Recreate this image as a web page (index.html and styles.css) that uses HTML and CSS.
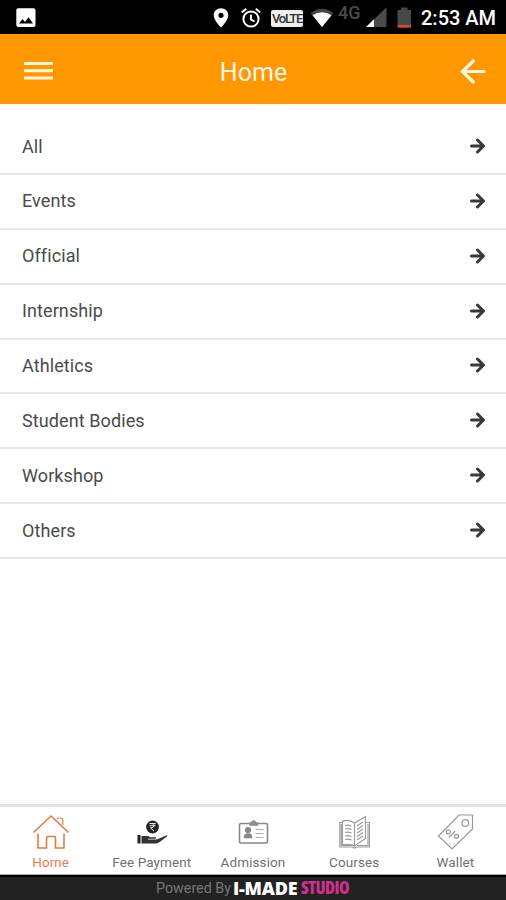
FILE: index.html
```html
<!DOCTYPE html>
<html lang="en">
<head>
<meta charset="utf-8">
<title>Home</title>
<link rel="stylesheet" href="styles.css">
</head>
<body>
<svg class="defs" aria-hidden="true">
  <symbol id="arrow" viewBox="0 0 16 16"><path d="M1.500 8h11.500M7.500 2 13.500 8l-6 6" fill="none" stroke="#383838" stroke-width="3" stroke-linecap="round" stroke-linejoin="round"/></symbol>
</svg>
<div class="app">
  <div class="status">
    <svg class="photo" width="20" height="20" viewBox="0 0 20 20"><rect x=".3" y=".3" width="19.2" height="18.7" rx="2" fill="#fff"/><path d="M3 15.5 6.5 11l2.5 3 3.5-4.7 4.5 6.200z" fill="#000"/></svg>
    <svg width="16" height="20" viewBox="0 0 16 20"><path fill="#fff" fill-rule="evenodd" d="M8 .3C3.800.3.700 3.300.700 7.300.700 12.500 8 19.500 8 19.500s7.300-7 7.300-12.200C15.300 3.300 12.200.3 8 .3zm0 4.400a2.600 2.600 0 1 1 0 5.200 2.600 2.600 0 0 1 0-5.200z"/></svg>
    <svg class="alarm" width="20" height="20" viewBox="0 0 20 20" fill="none" stroke="#fff" stroke-width="2"><circle cx="10" cy="11" r="7.600"/><path d="M10 6.500V11.500l3.500 2M.8 4.500l4.400-3.700M19.200 4.500l-4.400-3.700"/></svg>
    <span class="volte">VoLTE</span>
    <svg class="wifi" width="24" height="20" viewBox="0 0 24 20"><path d="M.5 5Q12-3.500 23.500 5L12 19z" fill="#444"/><path d="M2.500 7.200Q12 1.500 21.500 7.200L12 19z" fill="#fff"/></svg>
    <span class="net">4G</span>
    <svg class="signal" width="21" height="20" viewBox="0 0 21 20"><path d="M0 20 20.500.3V20z" fill="#4a4a4a"/><path d="M0 20 8 12.300V20z" fill="#fff"/></svg>
    <svg class="battery" width="15" height="21" viewBox="0 0 15 21"><path d="M.5 3H4V.5h6.500V3H14v15H.500z" fill="#484848"/><path d="M.5 18H14v2.700H.500z" fill="#dc4b1c"/></svg>
    <span class="time">2:53 AM</span>
  </div>
  <header class="bar">
    <svg width="30" height="20" viewBox="0 0 30 20"><path d="M0 2.500h29M0 9.700h29M0 17h29" stroke="#fff6e4" stroke-width="3"/></svg>
    <h1>Home</h1>
    <svg width="26" height="26" viewBox="0 0 26 26"><path d="M25.500 13.500H2.500M14.200 2 2.500 13.500l11.700 11.500" fill="none" stroke="#fff6e4" stroke-width="3.200"/></svg>
  </header>
  <main class="list">
    <div class="row">All<svg><use href="#arrow"/></svg></div>
    <div class="row">Events<svg><use href="#arrow"/></svg></div>
    <div class="row">Official<svg><use href="#arrow"/></svg></div>
    <div class="row">Internship<svg><use href="#arrow"/></svg></div>
    <div class="row">Athletics<svg><use href="#arrow"/></svg></div>
    <div class="row">Student Bodies<svg><use href="#arrow"/></svg></div>
    <div class="row">Workshop<svg><use href="#arrow"/></svg></div>
    <div class="row">Others<svg><use href="#arrow"/></svg></div>
  </main>
  <nav class="tabs">
    <div class="tab active">
      <svg viewBox="0 0 38 38" fill="none" stroke="#e07a45" stroke-width="1.600"><path d="M1.500 19.500 19 3l17.500 16.500"/><path d="M6 20.500V35h8.500V25q0-1.500 1.500-1.500h6q1.500 0 1.500 1.500v10H32V20.500"/><path d="M25 6.500q0-1.500 2-1.500h2q1.800 0 1.800 2v5" stroke-width="1.200"/></svg>
      <span>Home</span>
    </div>
    <div class="tab">
      <svg viewBox="0 0 38 38"><circle cx="19.500" cy="14" r="6.400" fill="#252525"/><path d="M16.500 10.500h6M16.500 12.800h6M17.500 10.500q4 0 3.500 2.200T17.500 15l3.500 3" fill="none" stroke="#eee" stroke-width="1"/><path d="M4.500 22h3v8.500h-3z" fill="#222"/><path d="M8.500 23h5q2 0 4 1.200h5q1.500 1.300-.5 2H16.500h8l8.500-3.700q2-.500 1 1l-8 6q-1.500 1-4 1H8.500z" fill="#333"/><path d="M15 26.200h8" stroke="#eee" stroke-width=".8"/></svg>
      <span>Fee Payment</span>
    </div>
    <div class="tab">
      <svg viewBox="0 0 38 38" fill="none" stroke="#888" stroke-width="1.600"><path d="M15 10.500H7q-1.500 0-1.500 1.500v16.500Q5.500 30 7 30h25q1.500 0 1.500-1.500V12q0-1.500-1.500-1.500H24"/><path d="M16 12v-2h2q0-2 1.700-2t1.700 2h2v2z" fill="#999"/><circle cx="14" cy="17" r="2.300" fill="#888"/><path d="M10.500 24.500q0-3.500 3.500-3.500t3.500 3.500z" fill="#888"/><path d="M21.500 16.500h8M21.500 20.500h8M21.500 24.500h8" stroke="#aaa" stroke-width="1.200"/></svg>
      <span>Admission</span>
    </div>
    <div class="tab">
      <svg viewBox="0 0 38 38" fill="none" stroke="#999" stroke-width="1.100"><path d="M19.500 10q-5-4-12-2v24q7-2 12 1zM19.500 10 30.500 3.500v22L19.500 33z"/><path d="M7.500 9.500H4.800V34H17.500q2 2 4 0h13V9.500h-4M6.300 11v21.500H18.500M33 11v21.500H22"/><path d="M10 12.500q3-1 6.500.5M10 16q3-1 6.500.5M10 19.500q3-1 6.500.5M10 23q3-1 6.500.5M10 26.500q3-1 6.500.5M22 13l6-4M22 16.500l6-4M22 20l6-4M22 23.500l6-4M22 27l6-4"/></svg>
      <span>Courses</span>
    </div>
    <div class="tab">
      <svg viewBox="0 0 38 38" fill="none" stroke="#999" stroke-width="1.200"><path d="M2.500 23 23 2H36.500V16L16 36z"/><circle cx="29.300" cy="10" r="3.300"/><path d="m12.800 24.500 6.400-6.500"/><circle cx="12.300" cy="18.800" r="2"/><circle cx="20.500" cy="23.300" r="2"/></svg>
      <span>Wallet</span>
    </div>
  </nav>
  <footer class="foot"><span class="by">Powered By</span><b class="made">I-MADE</b><b class="studio">STUDIO</b></footer>
</div>
</body>
</html>
```
FILE: styles.css
```css
* { box-sizing: border-box; }
body { margin: 0; background: #fff; font-family: Roboto, "Liberation Sans", sans-serif; }
svg { display: block; flex: none; }
.defs { position: absolute; width: 0; height: 0; }
.app { width: 506px; height: 900px; display: flex; flex-direction: column; overflow: hidden; }

.status { height: 34px; flex: none; background: #000; color: #fff; display: flex; align-items: flex-start; padding: 8px 0 0 16px; white-space: nowrap; }
.photo { margin-right: 177px; }
.alarm { margin-left: 12px; }
.volte { width: 32px; height: 17px; margin: 2px 0 0 10px; border-radius: 2px; background: #eee; color: #333; font-size: 13px; font-weight: 500; line-height: 18px; letter-spacing: -1.2px; text-align: center; }
.wifi { margin-left: 7px; }
.net { width: 25px; margin: -6px 0 0 4px; color: #4b4b4b; font-size: 18px; font-weight: 500; line-height: 22px; }
.signal { margin: -1px 0 0 3px; }
.battery { margin: -1px 0 0 10px; }
.time { margin: -2px 0 0 9px; font-size: 20px; font-weight: 500; line-height: 24px; }

.bar { height: 70px; flex: none; background: #ff9800; display: flex; align-items: center; justify-content: space-between; padding: 4px 20px 0 24px; }
.bar h1 { margin: 3px 7px 0 0; color: #fff6e4; font-size: 25px; font-weight: 400; line-height: 30px; }

.list { flex: 1; padding-top: 16.200px; }
.row { height: 54.850px; border-bottom: 2px solid #e6e6e6; display: flex; align-items: center; justify-content: space-between; padding: 0 20px 1px 22px; color: #4a4a4a; font-size: 18px; letter-spacing: .1px; }
.row svg { width: 16px; height: 16px; }

.tabs { height: 71px; flex: none; border-top: 3px solid #e3e3e3; border-bottom: 1px solid #aaa; display: flex; }
.tab { flex: 1; display: flex; flex-direction: column; align-items: center; padding-top: 6px; color: #707070; font-size: 13.500px; line-height: 16px; letter-spacing: .1px; white-space: nowrap; }
.tab svg { width: 38px; height: 38px; margin-bottom: 3px; }
.tab.active { color: #e58050; }

.foot { height: 25px; flex: none; background: #222; border-top: 2px solid #000; display: flex; align-items: center; padding: 0 0 1px 156px; white-space: nowrap; }
.by { width: 77px; color: #777; font-size: 14.300px; }
.made { width: 68px; color: #fff; font-family: "Open Sans", sans-serif; font-size: 18px; line-height: 20px; font-weight: 800; letter-spacing: -.2px; }
.studio { color: #cf2f8f; font-family: "Open Sans", sans-serif; font-size: 17px; line-height: 20px; font-stretch: condensed; font-weight: 800; letter-spacing: -.5px; }
```
